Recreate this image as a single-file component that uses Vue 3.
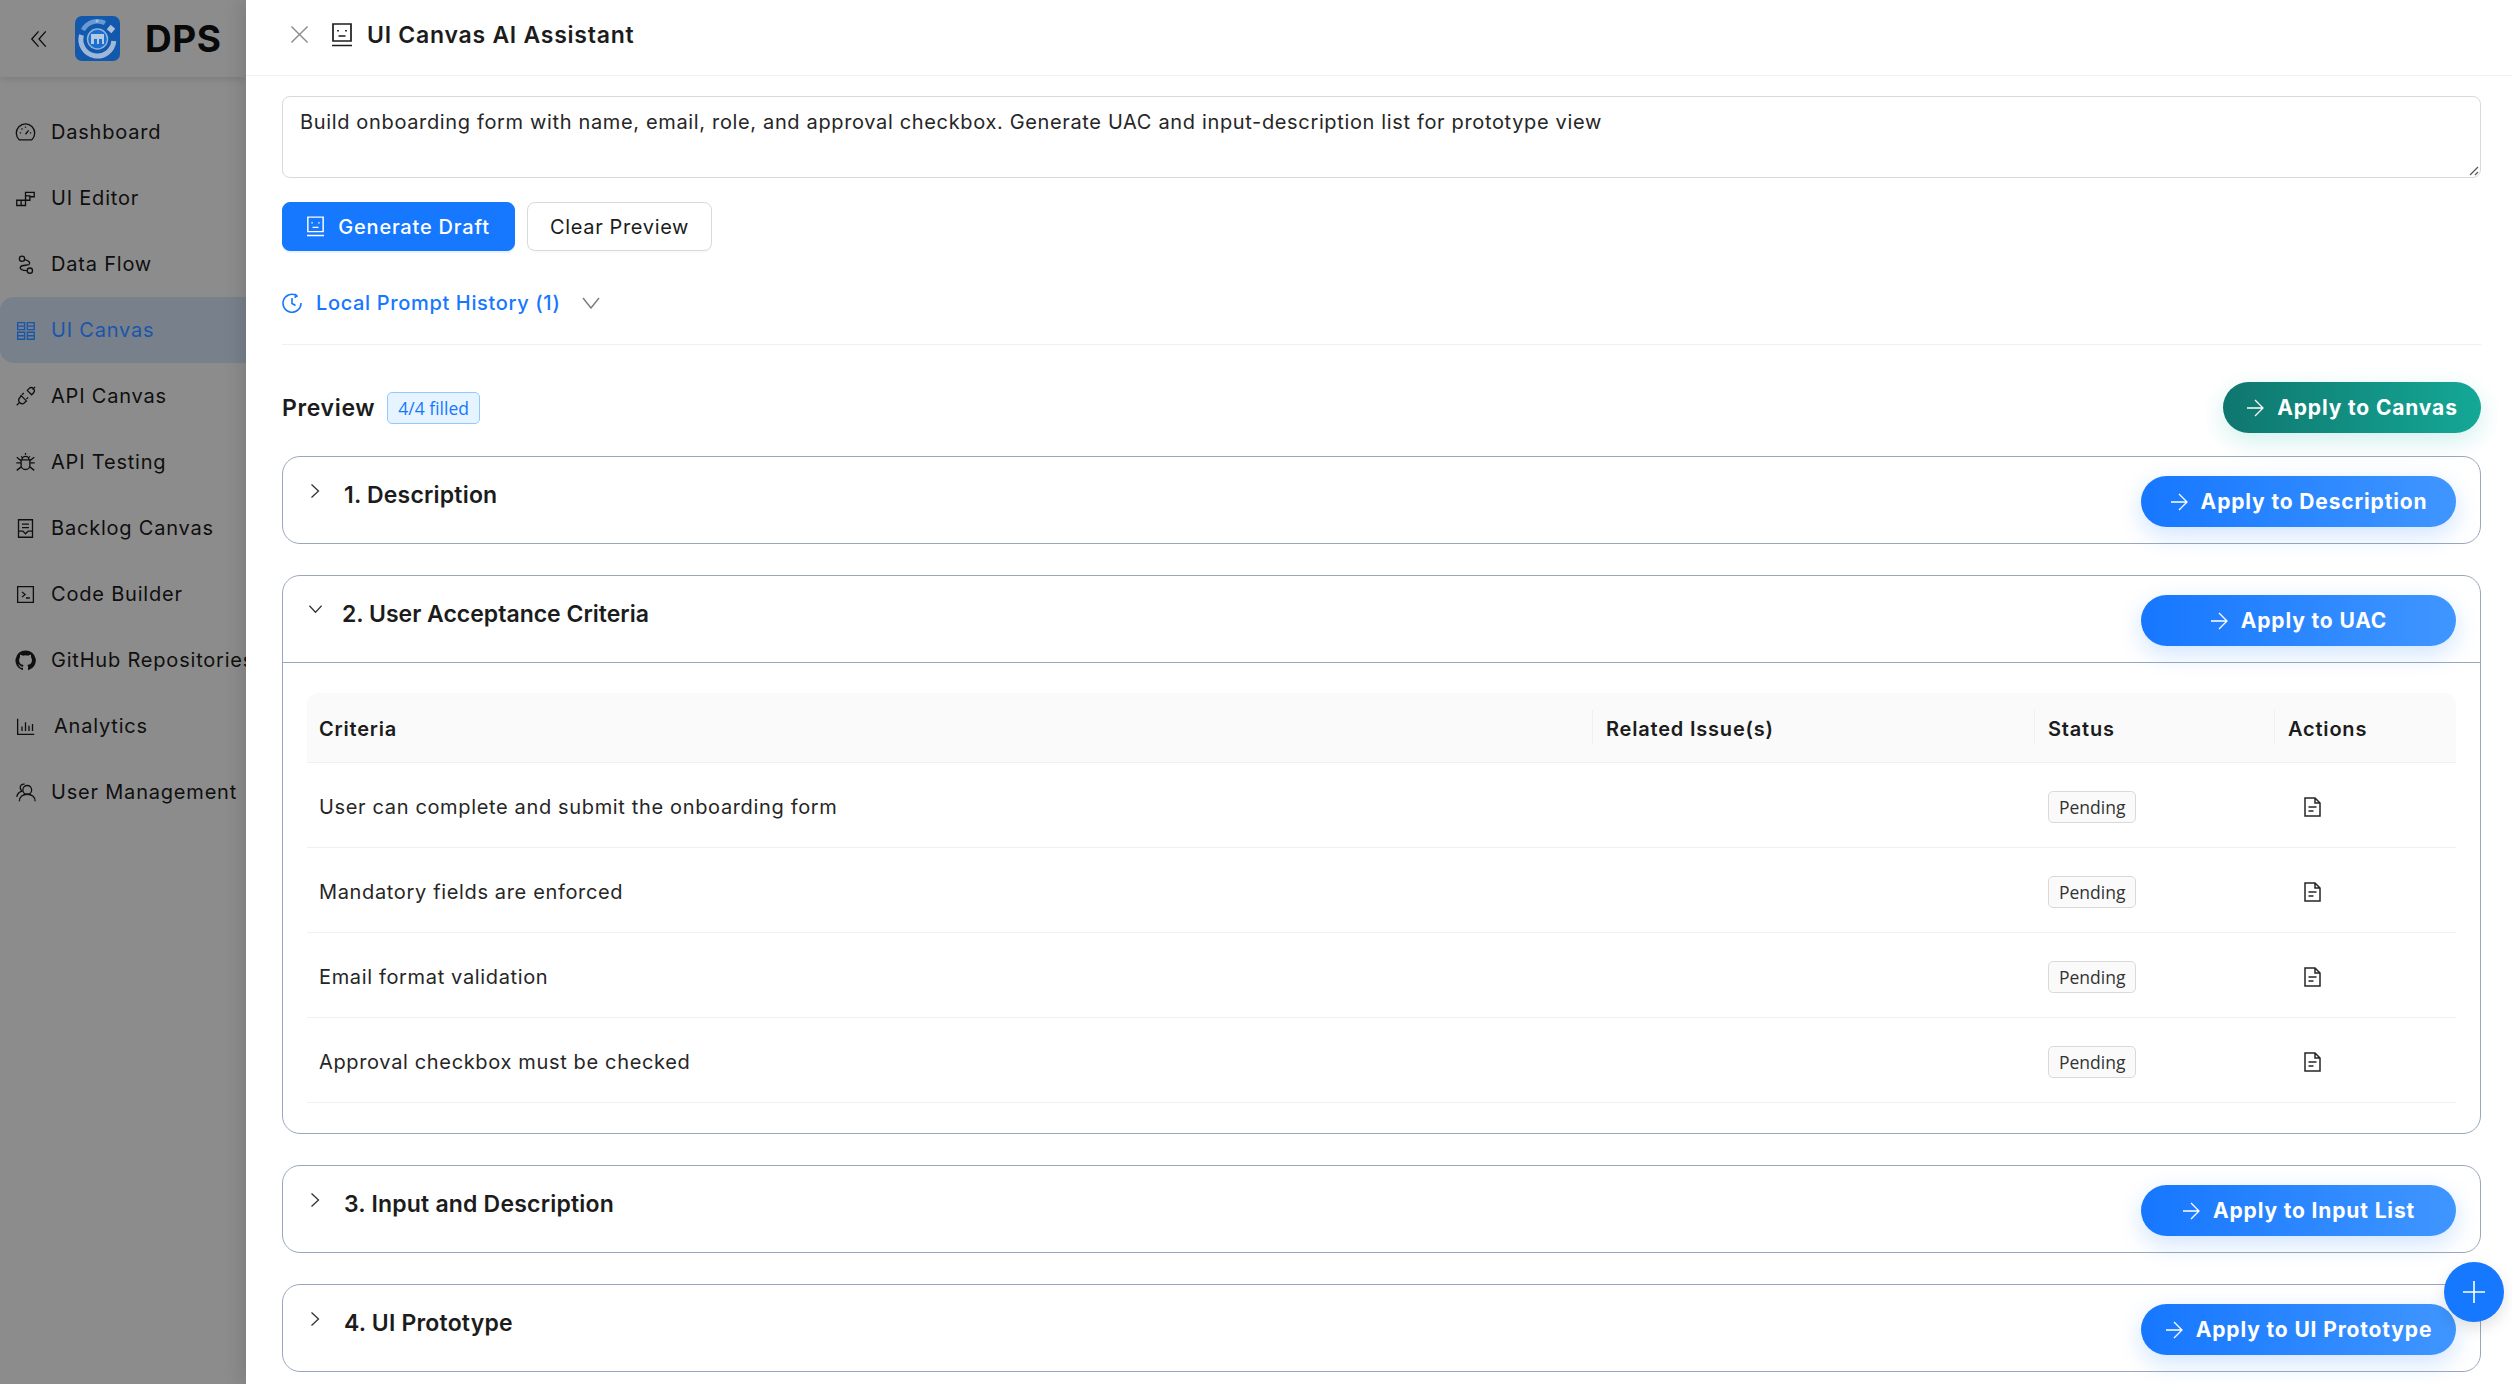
<script setup>
const navItems = [
  { label: 'Dashboard', icon: 'gauge' },
  { label: 'UI Editor', icon: 'blocks' },
  { label: 'Data Flow', icon: 'flow' },
  { label: 'UI Canvas', icon: 'grid', active: true },
  { label: 'API Canvas', icon: 'plug' },
  { label: 'API Testing', icon: 'bug' },
  { label: 'Backlog Canvas', icon: 'backlog' },
  { label: 'Code Builder', icon: 'code' },
  { label: 'GitHub Repositories', icon: 'github' },
  { label: 'Analytics', icon: 'chart', shifted: true },
  { label: 'User Management', icon: 'users' },
]

const criteria = [
  'User can complete and submit the onboarding form',
  'Mandatory fields are enforced',
  'Email format validation',
  'Approval checkbox must be checked',
]
</script>

<template>
  <div class="page">
    <aside class="sidebar">
      <div class="brand">
        <svg class="collapse" viewBox="0 0 20 20" fill="none" stroke="#1c1c1c" stroke-width="1.5">
          <path d="M9.5 1.5 2 10l7.5 8.5M17.5 1.5 10 10l7.5 8.5" />
        </svg>
        <svg class="logo" viewBox="0 0 45 45">
          <rect width="45" height="45" rx="7" fill="#1258ad" />
          <path d="M6.500 19a16.500 16.500 0 1 0 32.300 6" fill="none" stroke="#9fb8d8" stroke-width="5" />
          <path d="M8 14a16.500 16.500 0 0 1 22-7" fill="none" stroke="#6a9ad2" stroke-width="4.500" />
          <rect x="33" y="10" width="6" height="6" transform="rotate(40 36 13)" fill="#a9c0dc" />
          <circle cx="22" cy="5" r="1.500" fill="#a9c0dc" />
          <circle cx="22.500" cy="23" r="10" fill="#1a6fd0" stroke="#8fb1da" stroke-width="1.500" />
          <rect x="16" y="18" width="13" height="10" fill="#b5c9e2" />
          <rect x="19" y="23" width="3" height="5" fill="#1a6fd0" />
          <rect x="24" y="23" width="3" height="5" fill="#1a6fd0" />
        </svg>
        <span class="brand-name">DPS</span>
      </div>
      <nav class="nav">
        <div
          v-for="item in navItems"
          :key="item.label"
          class="nav-item"
          :class="{ active: item.active, shifted: item.shifted }"
        >
          <svg class="nav-icon" viewBox="0 0 24 24" fill="none" stroke="currentColor" stroke-width="1.500">
            <template v-if="item.icon === 'gauge'">
              <path d="M5 20.500a10.500 10.500 0 1 1 14 0zM12 14l3.500-4.500M5.500 12.500h1.500M17 12.500h1.500M12 5v1.500M7.500 7.500l1 1" />
            </template>
            <template v-else-if="item.icon === 'blocks'">
              <path d="M2 14h10v6H2zM7 14v6M12 14V9h5v5zM12 9V5h10v5h-5" />
            </template>
            <template v-else-if="item.icon === 'flow'">
              <circle cx="8" cy="5.500" r="3" /><circle cx="17" cy="19" r="3" />
              <path d="M11 6.500c5 1 7 3.500 5 5.500-2 1.500-8 0-9.500 2.500-1.500 2.500 1 4.500 7.500 4.500" />
            </template>
            <template v-else-if="item.icon === 'grid'">
              <path d="M3 3h8v8H3zM14 3h8v8h-8zM3 14h8v8H3zM14 14h8v8h-8zM3 7h8M14 7h8M3 18h8M14 18h8" />
            </template>
            <template v-else-if="item.icon === 'plug'">
              <path d="M7 11l6 6-2.500 2.500a3.500 3.500 0 0 1-5-.5 3.500 3.500 0 0 1-.5-5zM5 19l-3 3M10 8l-2 2M15 13l-2 2M14 5l5 5 2-2a3.500 3.500 0 0 0-5-5zM20 4l3-3" />
            </template>
            <template v-else-if="item.icon === 'bug'">
              <path d="M7 9h10v6a5 5 0 0 1-10 0zM8 9a4 4 0 0 1 8 0M7 5l2 2M17 5l-2 2M1.500 12.500H7M17 12.500h5.500M2 6l5 4M22 6l-5 4M2 21l5-4M22 21l-5-4M12 3V1" />
            </template>
            <template v-else-if="item.icon === 'backlog'">
              <path d="M4 2h16v20H4zM8 7h8M8 11h8M4 15h5l3 3 3-3h5" />
            </template>
            <template v-else-if="item.icon === 'code'">
              <path d="M3 3h18v18H3zM8 9l3.500 3L8 15M12.500 16H17" />
            </template>
            <template v-else-if="item.icon === 'github'">
              <path fill="currentColor" stroke="none" d="M12 .5a11.500 11.500 0 0 0-3.640 22.410c.58.1.79-.25.79-.55v-2.030c-3.200.7-3.880-1.370-3.880-1.370-.52-1.330-1.280-1.690-1.280-1.690-1.050-.72.080-.7.080-.7 1.160.08 1.770 1.190 1.770 1.190 1.030 1.760 2.700 1.250 3.360.96.100-.75.400-1.250.73-1.540-2.550-.29-5.240-1.280-5.240-5.690 0-1.260.450-2.280 1.180-3.090-.12-.29-.51-1.460.11-3.050 0 0 .97-.31 3.170 1.180a11 11 0 0 1 5.780 0c2.200-1.490 3.170-1.180 3.170-1.180.62 1.590.230 2.760.11 3.050.74.810 1.180 1.830 1.180 3.090 0 4.420-2.690 5.390-5.260 5.680.410.360.780 1.050.780 2.120v3.140c0 .31.210.66.800.55A11.500 11.500 0 0 0 12 .5z" />
            </template>
            <template v-else-if="item.icon === 'chart'">
              <path d="M3 3v18h19M8 17v-5M12 17V7M16 17v-6M20 17V9" />
            </template>
            <template v-else-if="item.icon === 'users'">
              <circle cx="14" cy="9" r="5" />
              <path d="M5 22c0-5 4-8 9-8s9 3 9 8M11 2.500C8 2 5.500 4 6 7c.2 1.500 1 2.500 2 3.500-3 1-5.500 3.500-6 6.500" />
            </template>
          </svg>
          <span>{{ item.label }}</span>
        </div>
      </nav>
    </aside>

    <main class="drawer">
      <header class="drawer-head">
        <svg class="close" viewBox="0 0 20 20" fill="none" stroke="#8c8c8c" stroke-width="1.500">
          <path d="M1.500 1.500l17 17M18.500 1.500l-17 17" />
        </svg>
        <svg class="robot" viewBox="0 0 20 24" fill="none" stroke="#1c1c1c" stroke-width="1.700">
          <path d="M1 1h18v17H1zM0 22.500h20M6 7v1.500M14 7v1.500M6.500 13h7" />
        </svg>
        <h1>UI Canvas AI Assistant</h1>
      </header>

      <div class="drawer-body">
        <div class="prompt">
          Build onboarding form with name, email, role, and approval checkbox. Generate UAC and input-description list for prototype view
          <svg class="resize" viewBox="0 0 12 12" stroke="#555" stroke-width="1.200"><path d="M11 3l-8 8M11 8l-3 3" /></svg>
        </div>

        <div class="prompt-actions">
          <button class="btn primary">
            <svg viewBox="0 0 20 24" fill="none" stroke="currentColor" stroke-width="1.700">
              <path d="M1 1h18v17H1zM0 22.500h20M6 7v1.500M14 7v1.500M6.500 13h7" />
            </svg>
            Generate Draft
          </button>
          <button class="btn">Clear Preview</button>
        </div>

        <div class="history">
          <svg class="clock" viewBox="0 0 20 20" fill="none" stroke="currentColor" stroke-width="1.600">
            <path d="M14 2.200A9 9 0 1 0 19 10M10 5v5.500l3.500 2M13 1l2 2-2.500 1.500" />
          </svg>
          <span>Local Prompt History (1)</span>
          <svg class="chev-down" viewBox="0 0 18 12" fill="none" stroke="#7a7a7a" stroke-width="1.400">
            <path d="M1 1l8 10 8-10" />
          </svg>
        </div>

        <div class="preview-row">
          <span class="preview-title">Preview</span>
          <span class="filled">4/4 filled</span>
          <button class="apply teal">
            <svg viewBox="0 0 18 18" fill="none" stroke="currentColor" stroke-width="1.300"><path d="M1 9h16M9 1l8 8-8 8" /></svg>
            Apply to Canvas
          </button>
        </div>

        <section class="panel">
          <div class="panel-head">
            <svg class="chev" viewBox="0 0 10 16" fill="none" stroke="#333" stroke-width="1.300"><path d="M1.500 1.500 8.500 8l-7 6.500" /></svg>
            <h2>1. Description</h2>
            <button class="apply">
              <svg viewBox="0 0 18 18" fill="none" stroke="currentColor" stroke-width="1.300"><path d="M1 9h16M9 1l8 8-8 8" /></svg>
              Apply to Description
            </button>
          </div>
        </section>

        <section class="panel">
          <div class="panel-head open">
            <svg class="chev down" viewBox="0 0 16 10" fill="none" stroke="#333" stroke-width="1.300"><path d="M1.500 1.500 8 8.500l6.500-7" /></svg>
            <h2>2. User Acceptance Criteria</h2>
            <button class="apply">
              <svg viewBox="0 0 18 18" fill="none" stroke="currentColor" stroke-width="1.300"><path d="M1 9h16M9 1l8 8-8 8" /></svg>
              Apply to UAC
            </button>
          </div>
          <div class="panel-body">
            <table class="uac">
              <colgroup>
                <col style="width: 1286px" />
                <col style="width: 442px" />
                <col style="width: 240px" />
                <col style="width: 181px" />
              </colgroup>
              <thead>
                <tr>
                  <th>Criteria</th>
                  <th>Related Issue(s)</th>
                  <th>Status</th>
                  <th>Actions</th>
                </tr>
              </thead>
              <tbody>
                <tr v-for="text in criteria" :key="text">
                  <td>{{ text }}</td>
                  <td></td>
                  <td><span class="tag">Pending</span></td>
                  <td>
                    <svg class="doc" viewBox="0 0 17 20" fill="none" stroke="#262626" stroke-width="1.500">
                      <path d="M1 1h10l5 5v13H1zM11 1v5h5M4.500 10h8M4.500 14h5" />
                    </svg>
                  </td>
                </tr>
              </tbody>
            </table>
          </div>
        </section>

        <section class="panel">
          <div class="panel-head">
            <svg class="chev" viewBox="0 0 10 16" fill="none" stroke="#333" stroke-width="1.300"><path d="M1.500 1.500 8.500 8l-7 6.500" /></svg>
            <h2>3. Input and Description</h2>
            <button class="apply">
              <svg viewBox="0 0 18 18" fill="none" stroke="currentColor" stroke-width="1.300"><path d="M1 9h16M9 1l8 8-8 8" /></svg>
              Apply to Input List
            </button>
          </div>
        </section>

        <section class="panel">
          <div class="panel-head">
            <svg class="chev" viewBox="0 0 10 16" fill="none" stroke="#333" stroke-width="1.300"><path d="M1.500 1.500 8.500 8l-7 6.500" /></svg>
            <h2>4. UI Prototype</h2>
            <button class="apply">
              <svg viewBox="0 0 18 18" fill="none" stroke="currentColor" stroke-width="1.300"><path d="M1 9h16M9 1l8 8-8 8" /></svg>
              Apply to UI Prototype
            </button>
          </div>
        </section>
      </div>

      <button class="fab">
        <svg viewBox="0 0 22 22" fill="none" stroke="#fff" stroke-width="1.600"><path d="M11 0v22M0 11h22" /></svg>
      </button>
    </main>
  </div>
</template>

<style scoped>
.page {
  display: flex;
  width: 2512px;
  height: 1384px;
  overflow: hidden;
  background: #fff;
  font-family: Inter, "Liberation Sans", sans-serif;
  letter-spacing: 0.65px;
  color: #1c1c1c;
}

.sidebar {
  position: relative;
  flex: 0 0 246px;
  overflow: hidden;
  background: #fff;
}
.sidebar::after {
  content: "";
  position: absolute;
  inset: 0;
  background: rgba(0, 0, 0, 0.45);
}
.brand {
  display: flex;
  align-items: center;
  height: 77px;
  padding-left: 30px;
  box-shadow: 0 2px 8px rgba(0, 0, 0, 0.12);
}
.collapse {
  width: 18px;
  height: 20px;
  margin-right: 27px;
}
.logo {
  position: relative;
  z-index: 1;
  width: 45px;
  height: 45px;
  margin-right: 25px;
}
.brand-name {
  font-size: 37px;
  font-weight: 700;
  letter-spacing: 0.5px;
  color: #111;
}
.nav {
  display: flex;
  flex-direction: column;
  padding-top: 22px;
}
.nav-item {
  display: flex;
  align-items: center;
  gap: 15px;
  height: 66px;
  padding-left: 15px;
  font-size: 20px;
  letter-spacing: 0.8px;
  white-space: nowrap;
  color: #1c1c1c;
}
.nav-item.active {
  position: relative;
  z-index: 1;
  background: #78808c;
  border-radius: 14px 0 0 14px;
  color: #1a56a8;
}
.nav-item.shifted {
  gap: 18px;
}
.nav-icon {
  flex: none;
  width: 21px;
  height: 21px;
}

.drawer {
  position: relative;
  z-index: 2;
  flex: 1;
  min-width: 0;
  background: #fff;
  box-shadow: -6px 0 16px rgba(0, 0, 0, 0.1);
}
.drawer-head {
  display: flex;
  align-items: center;
  box-sizing: border-box;
  height: 76px;
  padding: 0 0 6px 44px;
  border-bottom: 1px solid #f0f0f0;
}
.close {
  width: 19px;
  height: 19px;
  margin-right: 23px;
}
.robot {
  width: 20px;
  height: 24px;
  margin-right: 15px;
}
.drawer-head h1 {
  margin: 0;
  font-size: 23px;
  font-weight: 600;
  letter-spacing: 0.75px;
  color: #1c1c1c;
}
.drawer-body {
  padding: 20px 31px 0 36px;
}
.prompt {
  position: relative;
  box-sizing: border-box;
  height: 82px;
  padding: 11px 17px;
  border: 1px solid #d9d9d9;
  border-radius: 8px;
  font-size: 20px;
  line-height: 28px;
  color: #262626;
}
.resize {
  position: absolute;
  right: 1px;
  bottom: 1px;
  width: 12px;
  height: 12px;
}
.prompt-actions {
  display: flex;
  gap: 12px;
  margin-top: 24px;
}
.btn {
  display: flex;
  align-items: center;
  justify-content: center;
  gap: 14px;
  height: 49px;
  padding: 0 22px;
  border: 1px solid #d9d9d9;
  border-radius: 8px;
  background: #fff;
  box-shadow: 0 2px 0 rgba(0, 0, 0, 0.02);
  font: inherit;
  font-size: 20px;
  letter-spacing: 0.65px;
  color: #1c1c1c;
}
.btn.primary {
  width: 233px;
  padding: 0;
  border-color: #1677ff;
  background: #1677ff;
  box-shadow: 0 2px 0 rgba(5, 145, 255, 0.1);
  color: #fff;
  font-weight: 500;
  letter-spacing: 0.8px;
}
.btn.primary svg {
  width: 17px;
  height: 21px;
}
.history {
  display: flex;
  align-items: center;
  box-sizing: border-box;
  height: 90px;
  margin-top: 4px;
  padding-top: 6px;
  border-bottom: 1px solid #f0f0f0;
  font-size: 20px;
  font-weight: 500;
  color: #1677ff;
}
.clock {
  width: 20px;
  height: 20px;
  margin-right: 14px;
}
.chev-down {
  width: 18px;
  height: 12px;
  margin-left: 22px;
}
.preview-row {
  display: flex;
  align-items: center;
  height: 53px;
  margin-top: 36px;
  margin-bottom: 22px;
}
.preview-title {
  margin-right: 12px;
  font-size: 23px;
  font-weight: 600;
  color: #1c1c1c;
}
.filled {
  box-sizing: border-box;
  height: 32px;
  padding: 0 10px;
  border: 1px solid #91caff;
  border-radius: 5px;
  background: #e6f4ff;
  font-family: "Open Sans", sans-serif;
  font-size: 17.5px;
  letter-spacing: 0;
  line-height: 30px;
  color: #1677ff;
}
.apply {
  display: flex;
  align-items: center;
  justify-content: center;
  gap: 13px;
  flex: none;
  width: 315px;
  height: 51px;
  margin-left: auto;
  border: 0;
  border-radius: 26px;
  background: linear-gradient(90deg, #1677ff, #4096ff);
  box-shadow: 0 8px 24px rgba(22, 119, 255, 0.2);
  font: inherit;
  font-size: 21px;
  font-weight: 700;
  letter-spacing: 0.85px;
  color: #fff;
}
.apply svg {
  width: 18px;
  height: 18px;
}
.apply.teal {
  width: 258px;
  background: linear-gradient(90deg, #0f766e, #14a896);
  box-shadow: 0 8px 24px rgba(20, 184, 166, 0.2);
}
.panel {
  margin-bottom: 31px;
  border: 1px solid #9aa8bd;
  border-radius: 18px;
}
.panel-head {
  display: flex;
  align-items: flex-start;
  box-sizing: border-box;
  height: 86px;
  padding: 19px 24px 0 25px;
}
.panel-head.open {
  height: 87px;
  border-bottom: 1px solid #9aa8bd;
}
.panel-head h2 {
  margin: 3px 0 0;
  font-size: 23px;
  font-weight: 600;
  letter-spacing: 0.2px;
  line-height: 32px;
  color: #1c1c1c;
}
.panel-head.open h2 {
  letter-spacing: 0;
}
.chev {
  width: 10px;
  height: 16px;
  margin: 7px 24px 0 2px;
}
.chev.down {
  width: 15px;
  height: 10px;
  margin: 9px 19px 0 0;
}
.panel-body {
  padding: 30px 24px;
}
.uac {
  width: 2149px;
  table-layout: fixed;
  border-collapse: separate;
  border-spacing: 0;
  font-size: 20px;
}
.uac th {
  position: relative;
  height: 70px;
  box-sizing: border-box;
  padding: 2px 13px 0;
  border-bottom: 1px solid #f0f0f0;
  background: #fafafa;
  text-align: left;
  font-weight: 600;
  letter-spacing: 0.8px;
  color: #1c1c1c;
}
.uac th:first-child {
  padding-left: 12px;
  border-top-left-radius: 12px;
}
.uac th:last-child {
  border-top-right-radius: 12px;
}
.uac th:not(:last-child)::after {
  content: "";
  position: absolute;
  top: 17px;
  right: 0;
  bottom: 17px;
  width: 1px;
  background: #f0f0f0;
}
.uac td {
  height: 85px;
  box-sizing: border-box;
  padding: 3px 13px 0;
  border-bottom: 1px solid #f0f0f0;
  color: #262626;
}
.uac td:first-child {
  padding-left: 12px;
}
.tag {
  display: inline-block;
  box-sizing: border-box;
  height: 32px;
  padding: 0 10px;
  border: 1px solid #d9d9d9;
  border-radius: 5px;
  background: #fafafa;
  font-family: "Open Sans", sans-serif;
  font-size: 17.5px;
  letter-spacing: 0;
  line-height: 30px;
  color: #333;
  vertical-align: middle;
}
.doc {
  display: block;
  width: 17px;
  height: 20px;
  margin-left: 16px;
}
.fab {
  position: absolute;
  top: 1262px;
  right: 8px;
  display: flex;
  align-items: center;
  justify-content: center;
  width: 60px;
  height: 60px;
  padding: 0;
  border: 0;
  border-radius: 50%;
  background: #1677ff;
  box-shadow: 0 6px 16px rgba(0, 0, 0, 0.12);
}
.fab svg {
  width: 22px;
  height: 22px;
}
</style>
